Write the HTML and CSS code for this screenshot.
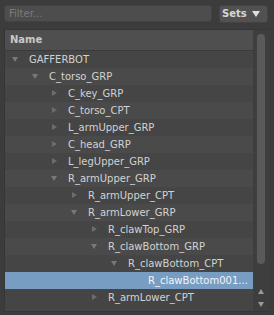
FILE: index.html
```html
<!DOCTYPE html>
<html lang="en">
<head>
    <meta charset="UTF-8">
    <title>Hierarchy</title>
    <link rel="stylesheet" href="styles.css">
</head>
<body>
    <div class="toolbar">
        <div class="filter">Filter...</div>
        <div class="sets">Sets <span class="sets-arrow"></span></div>
    </div>

    <div class="panel">
        <div class="tree">
            <div class="header">Name</div>
            <div class="row l0"><span class="arrow open"></span>GAFFERBOT</div>
            <div class="row alt l1"><span class="arrow open"></span>C_torso_GRP</div>
            <div class="row l2"><span class="arrow closed"></span>C_key_GRP</div>
            <div class="row alt l2"><span class="arrow closed"></span>C_torso_CPT</div>
            <div class="row l2"><span class="arrow closed"></span>L_armUpper_GRP</div>
            <div class="row alt l2"><span class="arrow closed"></span>C_head_GRP</div>
            <div class="row l2"><span class="arrow closed"></span>L_legUpper_GRP</div>
            <div class="row alt l2"><span class="arrow open"></span>R_armUpper_GRP</div>
            <div class="row l3"><span class="arrow closed"></span>R_armUpper_CPT</div>
            <div class="row alt l3"><span class="arrow open"></span>R_armLower_GRP</div>
            <div class="row l4"><span class="arrow closed"></span>R_clawTop_GRP</div>
            <div class="row alt l4"><span class="arrow open"></span>R_clawBottom_GRP</div>
            <div class="row l5"><span class="arrow open"></span>R_clawBottom_CPT</div>
            <div class="row selected l6"><span class="arrow"></span>R_clawBottom001...</div>
            <div class="row l4"><span class="arrow closed"></span>R_armLower_CPT</div>
        </div>
        <div class="scroll">
            <div class="track">
                <div class="thumb"></div>
            </div>
            <div class="step up"></div>
            <div class="step down"></div>
        </div>
    </div>
</body>
</html>
```

FILE: styles.css
```css
body {
    margin: 0;
    background: #3c3c3c;
    font-family: "DejaVu Sans", sans-serif;
    font-size: 10px;
    color: #d2d2d2;
    overflow: hidden;
}

/* 顶部过滤栏 */
.toolbar {
    display: flex;
    gap: 7px;
    padding: 5px 6px 0 4px;
    height: 18px;
}

.filter {
    flex: 1;
    height: 15px;
    line-height: 15px;
    padding-left: 4px;
    background: #4d4d4d;
    border: 1px solid #424242;
    border-radius: 3px;
    color: #7c7c7c;
}

.sets {
    width: 45px;
    height: 16px;
    line-height: 16px;
    padding-left: 2px;
    background: #515151;
    border: 1px solid #434343;
    border-radius: 3px;
    font-weight: bold;
    color: #d6d6d6;
    display: flex;
    align-items: center;
    gap: 5px;
    box-sizing: content-box;
}

.sets-arrow {
    width: 0;
    height: 0;
    border-left: 4px solid transparent;
    border-right: 4px solid transparent;
    border-top: 6px solid #e0e0e0;
}

/* 树形面板 */
.panel {
    display: flex;
    margin: 6px 5px 0 4px;
    height: 281px;
    border: 1px solid #363636;
    border-right: none;
    background: #454545;
}

.tree {
    flex: 1;
    overflow: hidden;
}

.header {
    height: 20px;
    line-height: 20px;
    padding-left: 5px;
    background: #4f4f4f;
    border-bottom: 1px solid #3a3a3a;
    font-weight: bold;
    color: #c8c8c8;
}

.row {
    height: 17px;
    line-height: 17px;
    display: flex;
    align-items: center;
    white-space: nowrap;
    background: #454545;
}

.row.alt {
    background: #4a4a4a;
}

.row.selected {
    background: #789dc2;
    color: #f4f4f4;
}

.l0 { padding-left: 7px; }
.l1 { padding-left: 27px; }
.l2 { padding-left: 46px; }
.l3 { padding-left: 66px; }
.l4 { padding-left: 86px; }
.l5 { padding-left: 106px; }
.l6 { padding-left: 126px; }

.arrow {
    width: 17px;
    height: 17px;
    flex: none;
    position: relative;
}

.arrow.open::before,
.arrow.closed::before {
    content: "";
    position: absolute;
    width: 0;
    height: 0;
}

.arrow.open::before {
    left: 0;
    top: 6px;
    border-left: 3px solid transparent;
    border-right: 3px solid transparent;
    border-top: 5px solid #787878;
}

.arrow.closed::before {
    left: 1px;
    top: 5px;
    border-top: 3px solid transparent;
    border-bottom: 3px solid transparent;
    border-left: 5px solid #6c6c6c;
}

/* 滚动条 */
.scroll {
    width: 16px;
    display: flex;
    flex-direction: column;
    background: #3e3e3e;
}

.track {
    flex: 1;
    padding: 4px 4px 0 4px;
}

.thumb {
    height: 230px;
    background: #5a5a5a;
    border-radius: 4px;
}

.step {
    height: 13px;
    position: relative;
}

.step::before {
    content: "";
    position: absolute;
    left: 5px;
    width: 0;
    height: 0;
    border-left: 3px solid transparent;
    border-right: 3px solid transparent;
}

.step.up::before {
    top: 4px;
    border-bottom: 5px solid #9a9a9a;
}

.step.down::before {
    top: 4px;
    border-top: 5px solid #9a9a9a;
}
```
